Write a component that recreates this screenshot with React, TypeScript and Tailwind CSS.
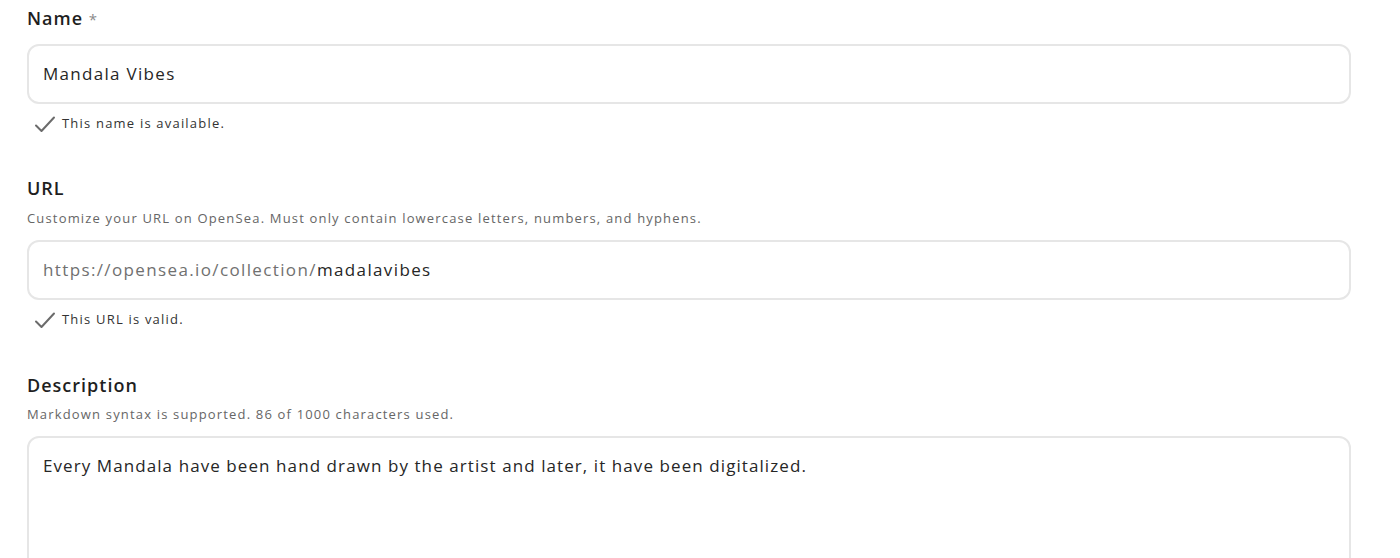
import React from "react";

const font = { fontFamily: '"Open Sans", "Liberation Sans", sans-serif' };

function Check() {
  return (
    <svg width="22" height="18" viewBox="0 0 22 18" fill="none" className="shrink-0">
      <path d="M2 10.5 L7.5 16 L20 2.5" stroke="#6b6b6b" strokeWidth="2" strokeLinecap="round" strokeLinejoin="round" />
    </svg>
  );
}

export default function App() {
  return (
    <div className="w-[1400px] h-[558px] overflow-hidden bg-white pl-[27px] pr-[49px] pt-[6px] text-[#222]" style={font}>
      <div className="text-[18px] leading-[24px] font-semibold tracking-[1px] text-[#1f1f1f]">
        Name <span className="text-[#8a8a8a] font-normal text-[15px]">*</span>
      </div>
      <div className="mt-[13px] h-[60px] rounded-[12px] border-2 border-[#e6e6e6] flex items-center px-[14px] text-[17px] tracking-[1.3px] text-[#262626]">
        Mandala Vibes
      </div>
      <div className="mt-[11px] h-[18px] flex items-center gap-[6px] pl-[7px] text-[13px] tracking-[1.2px] text-[#333]">
        <Check />
        <span>This name is available.</span>
      </div>

      <div className="mt-[43px] text-[18px] leading-[24px] font-semibold tracking-[1px] text-[#1f1f1f]">URL</div>
      <div className="mt-[9px] text-[13px] leading-[18px] tracking-[1.17px] text-[#666]">
        Customize your URL on OpenSea. Must only contain lowercase letters, numbers, and hyphens.
      </div>
      <div className="mt-[13px] h-[60px] rounded-[12px] border-2 border-[#e6e6e6] flex items-center px-[14px] text-[17px] tracking-[1.37px]">
        <span className="text-[#707070]">https://opensea.io/collection/</span>
        <span className="text-[#262626]">madalavibes</span>
      </div>
      <div className="mt-[11px] h-[18px] flex items-center gap-[6px] pl-[7px] text-[13px] tracking-[1.2px] text-[#333]">
        <Check />
        <span>This URL is valid.</span>
      </div>

      <div className="mt-[44px] text-[18px] leading-[24px] font-semibold tracking-[1px] text-[#1f1f1f]">Description</div>
      <div className="mt-[8px] text-[13px] leading-[18px] tracking-[1.17px] text-[#666]">
        Markdown syntax is supported. 86 of 1000 characters used.
      </div>
      <div className="mt-[13px] h-[200px] rounded-[12px] border-2 border-[#e6e6e6] px-[14px] pt-[16px] text-[17px] leading-[24px] tracking-[1.08px] text-[#262626]">
        Every Mandala have been hand drawn by the artist and later, it have been digitalized.
      </div>
    </div>
  );
}
